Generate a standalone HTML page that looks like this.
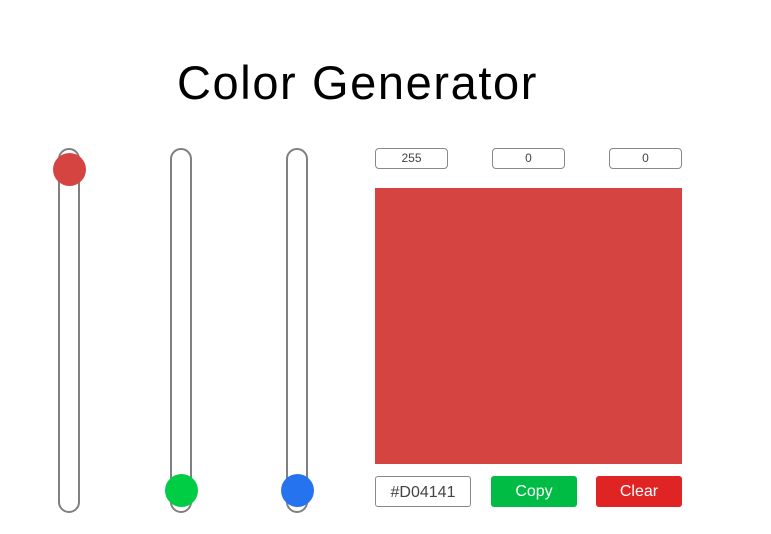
<!DOCTYPE html>
<html><head><style>
body{margin:0;width:771px;height:534px;background:#fff;position:relative;overflow:hidden;font-family:"Liberation Sans",sans-serif}
.a{position:absolute;box-sizing:border-box}
h1{position:absolute;left:177px;top:55px;margin:0;font-weight:normal;font-size:47px;letter-spacing:1.6px;line-height:56px;color:#000;white-space:nowrap}
.t{width:22px;top:148px;height:365px;border:2px solid #808080;border-radius:11px}
.k{width:33px;height:33px;border-radius:50%}
.i{top:148px;height:21px;width:73px;border:1px solid #888;border-radius:4px;font-size:12px;color:#444;text-align:center;line-height:19px}
.b{top:476px;height:31px;border-radius:3px;font-size:16px;line-height:31px;text-align:center}
</style></head><body>
<h1>Color Generator</h1>
<div class="a t" style="left:58px"></div>
<div class="a t" style="left:170px"></div>
<div class="a t" style="left:286px"></div>
<div class="a k" style="left:53px;top:153px;background:#d64441"></div>
<div class="a k" style="left:165px;top:474px;background:#00cc44"></div>
<div class="a k" style="left:281px;top:474px;background:#2673f0"></div>
<div class="a i" style="left:375px">255</div>
<div class="a i" style="left:492px">0</div>
<div class="a i" style="left:609px">0</div>
<div class="a" style="left:375px;top:188px;width:307px;height:276px;background:#d64441"></div>
<div class="a b" style="left:375px;width:96px;border:1px solid #888;color:#444">#D04141</div>
<div class="a b" style="left:491px;width:86px;background:#00bb44;color:#fff">Copy</div>
<div class="a b" style="left:596px;width:86px;background:#e02424;color:#fff">Clear</div>
</body></html>
